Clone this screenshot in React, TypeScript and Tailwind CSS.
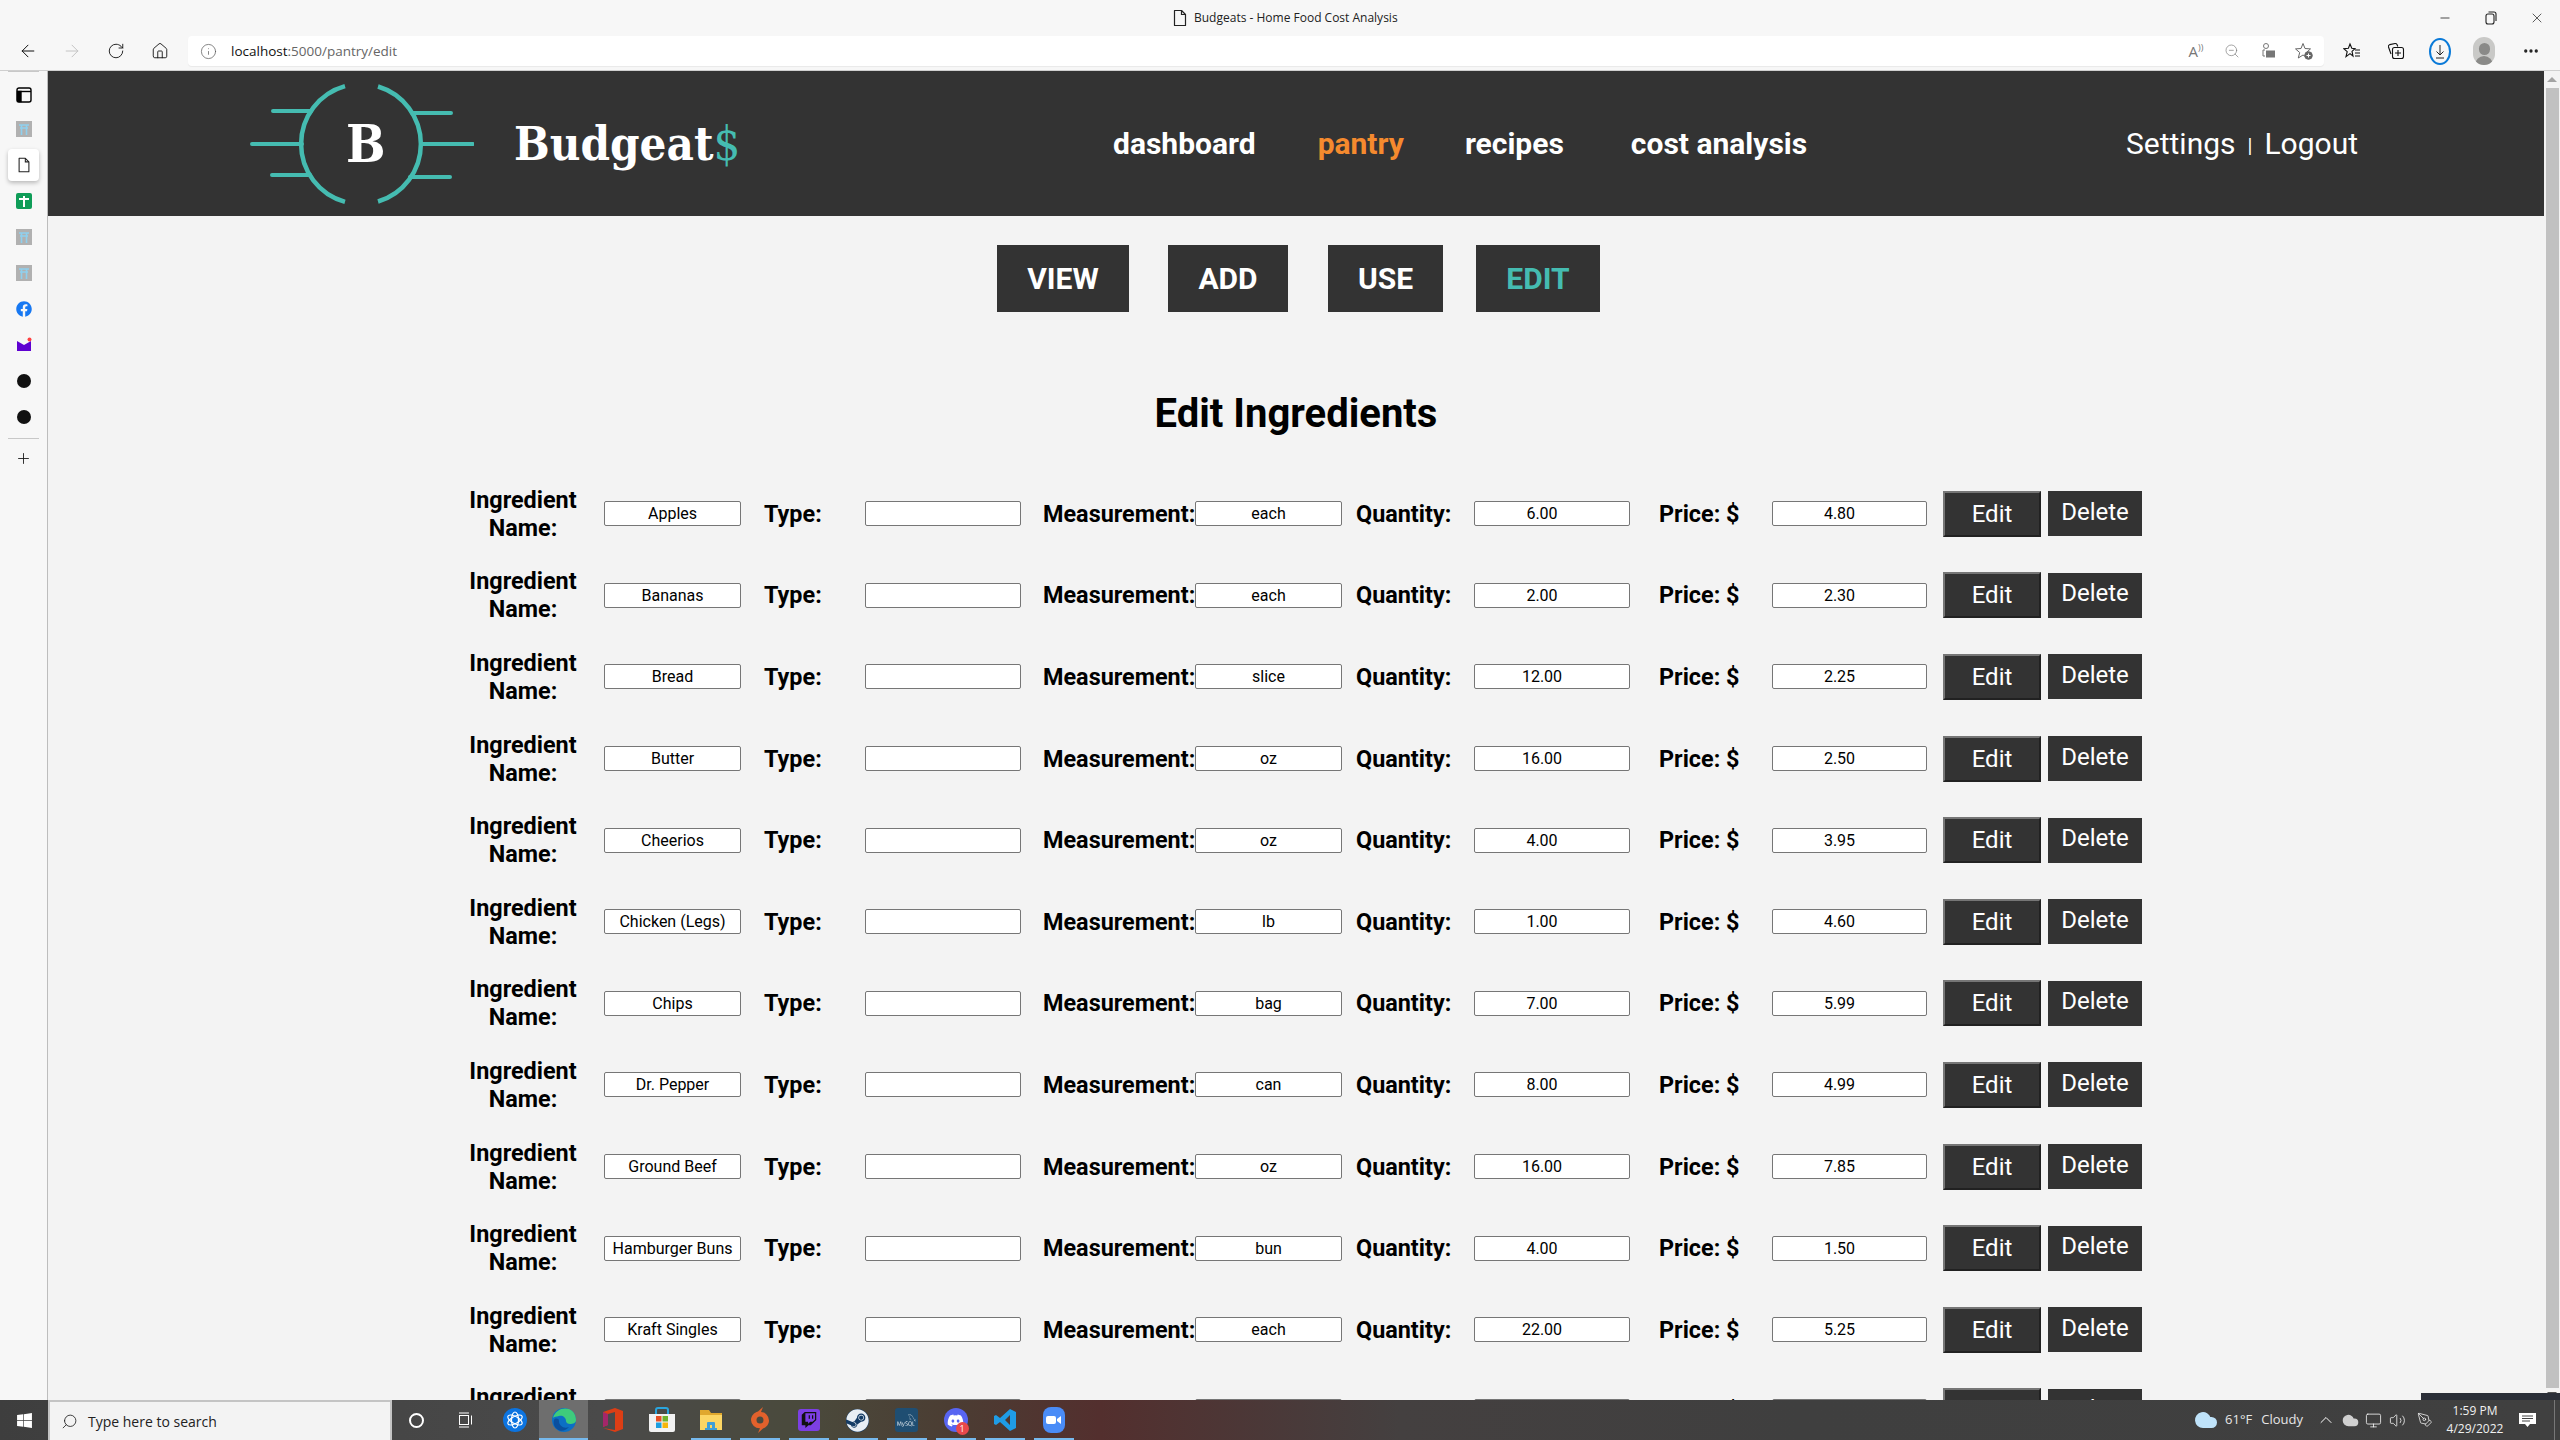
import { ArrowLeft, ArrowRight, RotateCw, Home, Info, ZoomOut, Minus, X, Plus, ChevronUp, Volume2, Monitor, Search, PenTool, Cloud, Ellipsis } from "lucide-react";
import { FaWindows, FaTwitch, FaSteam, FaDiscord, FaFacebook } from "react-icons/fa";
import { SiMysql } from "react-icons/si";

const ingredients = [
  { name: "Apples", unit: "each", qty: "6.00", price: "4.80" },
  { name: "Bananas", unit: "each", qty: "2.00", price: "2.30" },
  { name: "Bread", unit: "slice", qty: "12.00", price: "2.25" },
  { name: "Butter", unit: "oz", qty: "16.00", price: "2.50" },
  { name: "Cheerios", unit: "oz", qty: "4.00", price: "3.95" },
  { name: "Chicken (Legs)", unit: "lb", qty: "1.00", price: "4.60" },
  { name: "Chips", unit: "bag", qty: "7.00", price: "5.99" },
  { name: "Dr. Pepper", unit: "can", qty: "8.00", price: "4.99" },
  { name: "Ground Beef", unit: "oz", qty: "16.00", price: "7.85" },
  { name: "Hamburger Buns", unit: "bun", qty: "4.00", price: "1.50" },
  { name: "Kraft Singles", unit: "each", qty: "22.00", price: "5.25" },
  { name: "", unit: "", qty: "", price: "" },
];

const DocIcon = ({ size = 18 }: { size?: number }) => (
  <svg width={size} height={size} viewBox="0 0 18 18" fill="none" stroke="#222" strokeWidth="1.2">
    <path d="M3.5 1.5h7l4 4v11h-11z" strokeLinejoin="round" />
    <path d="M10.5 1.5v4h4" />
  </svg>
);

const Torii = () => (
  <div className="w-4 h-4 bg-[#b1b1b1] flex items-center justify-center">
    <svg width="12" height="12" viewBox="0 0 12 12" stroke="#8fd0ee" strokeWidth="1.6" fill="none">
      <path d="M1 2h10M2 5h8M3.5 2v10M8.5 2v10" />
    </svg>
  </div>
);

const SideSlot = ({ children, h = "h-9" }: { children: React.ReactNode; h?: string }) => (
  <div className={`${h} flex items-center justify-center`}>{children}</div>
);

const Sidebar = () => (
  <aside className="w-[48px] shrink-0 border-r border-[#bdbdbd] bg-[#f7f7f7] flex flex-col items-center">
    <div className="w-[31px] h-px bg-[#c8c8c8] mb-[6px] mr-[1px]" />
    <SideSlot h="h-[34px]">
      <svg width="16" height="16" viewBox="0 0 16 16" fill="none" stroke="#000" strokeWidth="1.4">
        <rect x="1" y="1" width="14" height="14" rx="2" />
        <path d="M1 4.5h14" />
        <rect x="1.5" y="4.5" width="3.5" height="10" fill="#000" />
      </svg>
    </SideSlot>
    <SideSlot h="h-[34px]"><Torii /></SideSlot>
    <div className="w-[31px] h-[32px] bg-white rounded-[4px] shadow-[0_2px_4px_rgba(0,0,0,0.25)] flex items-center justify-center mt-[3px] mb-[2px]">
      <DocIcon size={16} />
    </div>
    <SideSlot>
      <div className="w-4 h-4 rounded-[2px] bg-[#0f9d58] relative flex items-center justify-center">
        <div className="w-[10px] h-[2px] bg-white absolute top-[5px]" />
        <div className="w-[2px] h-[11px] bg-white" />
      </div>
    </SideSlot>
    <SideSlot><Torii /></SideSlot>
    <SideSlot><Torii /></SideSlot>
    <SideSlot><FaFacebook className="text-[#1778f2] text-[16px]" /></SideSlot>
    <SideSlot>
      <svg width="16" height="16" viewBox="0 0 16 16">
        <path d="M1 4l7 4 7-4v10H1z" fill="#5f01d1" />
        <circle cx="13.5" cy="2.5" r="2" fill="#ff4040" />
      </svg>
    </SideSlot>
    <SideSlot><div className="w-[14px] h-[14px] rounded-full bg-[#111]" /></SideSlot>
    <SideSlot><div className="w-[14px] h-[14px] rounded-full bg-[#111]" /></SideSlot>
    <div className="w-[31px] h-px bg-[#c8c8c8] mt-[3px] mb-[11px] mr-[1px]" />
    <Plus size={17} strokeWidth={1.2} color="#111" />
  </aside>
);

const TitleBar = () => (
  <div className="h-[36px] flex items-center pl-[1171px] text-[12px] text-[#222]">
    <DocIcon size={18} />
    <span className="ml-[5px] mb-[1px]">Budgeats - Home Food Cost Analysis</span>
    <div className="ml-auto flex items-center text-[#222]">
      <div className="w-[46px] flex justify-center"><Minus size={14} strokeWidth={1.4} /></div>
      <div className="w-[46px] flex justify-center">
        <svg width="12" height="14" viewBox="0 0 12 14" fill="none" stroke="#222" strokeWidth="1.1">
          <rect x="1" y="3" width="8" height="10" rx="2" />
          <path d="M3.5 1h5.5a2 2 0 0 1 2 2v7" />
        </svg>
      </div>
      <div className="w-[46px] flex justify-center"><X size={16} strokeWidth={1.1} /></div>
    </div>
  </div>
);

const ToolBtn = ({ children, w = "w-[44px]" }: { children: React.ReactNode; w?: string }) => (
  <div className={`${w} flex items-center justify-center`}>{children}</div>
);

const Toolbar = () => (
  <div className="h-[34px] flex items-start pl-[6px] pr-[4px]">
    <ToolBtn w="w-[44px] h-[30px]"><ArrowLeft size={20} strokeWidth={1.2} color="#111" /></ToolBtn>
    <ToolBtn w="w-[44px] h-[30px]"><ArrowRight size={20} strokeWidth={1.2} color="#c4c4c4" /></ToolBtn>
    <ToolBtn w="w-[44px] h-[30px]"><RotateCw size={18} strokeWidth={1.2} color="#111" /></ToolBtn>
    <ToolBtn w="w-[44px] h-[30px]"><Home size={18} strokeWidth={1.2} color="#111" /></ToolBtn>
    <div className="ml-[6px] flex-1 h-[30px] bg-white rounded-[4px] shadow-[0_1px_1px_rgba(0,0,0,0.06)] flex items-center pl-[12px]">
      <Info size={17} strokeWidth={1} color="#555" />
      <span className="ml-[14px] text-[13.5px] text-[#666]"><span className="text-[#111]">localhost</span>:5000/pantry/edit</span>
      <div className="ml-auto flex items-center text-[#777] pr-[2px]">
        <ToolBtn w="w-[36px]"><span className="text-[15px] text-[#777]">A<span className="text-[9px] align-super">))</span></span></ToolBtn>
        <ToolBtn w="w-[36px]"><ZoomOut size={16} strokeWidth={1} /></ToolBtn>
        <ToolBtn w="w-[36px]">
          <svg width="16" height="18" viewBox="0 0 16 18" fill="none" stroke="#777" strokeWidth="1">
            <circle cx="6" cy="4" r="2.5" />
            <path d="M5 8H3v6h2" />
            <rect x="6.5" y="9" width="8" height="6" fill="#777" />
          </svg>
        </ToolBtn>
        <ToolBtn w="w-[36px]">
          <svg width="18" height="18" viewBox="0 0 18 18" fill="none" stroke="#666" strokeWidth="1">
            <path d="M8 1.5l2 5 5.5.4-4.2 3.6 1.4 5.4L8 13l-4.7 3 1.4-5.5L.5 6.9 6 6.5z" />
            <circle cx="13.5" cy="13.5" r="3.8" fill="#666" />
            <path d="M13.5 11.5v4M11.5 13.5h4" stroke="#fff" />
          </svg>
        </ToolBtn>
      </div>
    </div>
    <div className="ml-[6px] flex items-center h-[30px]">
      <ToolBtn>
        <svg width="18" height="18" viewBox="0 0 18 18" fill="none" stroke="#111" strokeWidth="1.1">
          <path d="M7 2l1.8 4.3 3.2.3-3 2.8 1 4.6-3-2.4-4 3 1.2-5L1 6.8l4.4-.5z" />
          <path d="M12 8h5M12 11h5M12 14h5" />
        </svg>
      </ToolBtn>
      <ToolBtn>
        <svg width="18" height="18" viewBox="0 0 18 18" fill="none" stroke="#111" strokeWidth="1.1">
          <path d="M4 12L1.5 5a2 2 0 0 1 1.3-2.4L8 1.5a2 2 0 0 1 2 1l.8 2" />
          <rect x="5.5" y="5.5" width="11" height="11" rx="2" />
          <path d="M11 8v6M8 11h6" />
        </svg>
      </ToolBtn>
      <ToolBtn>
        <svg width="22" height="27" viewBox="0 0 22 27" fill="none">
          <ellipse cx="11" cy="13.5" rx="10" ry="12.5" stroke="#0a7ad8" strokeWidth="2" />
          <path d="M11 7v10M7.5 13.5L11 17l3.5-3.5M7 20h8" stroke="#222" strokeWidth="1" />
        </svg>
      </ToolBtn>
      <ToolBtn>
        <div className="w-[22px] h-[28px] rounded-full bg-[#c9c9c7] flex flex-col items-center justify-end overflow-hidden">
          <div className="w-[11px] h-[12px] rounded-full bg-[#8a8a88] mb-[1px]" />
          <div className="w-[18px] h-[9px] rounded-t-full bg-[#8a8a88]" />
        </div>
      </ToolBtn>
      <ToolBtn w="w-[50px]"><Ellipsis size={18} strokeWidth={2.4} color="#222" /></ToolBtn>
    </div>
  </div>
);

const Logo = () => (
  <div className="relative w-[224px] h-[122px] shrink-0">
    <svg width="224" height="122" viewBox="0 0 224 122" fill="none" stroke="#45bcb1" strokeWidth="4.5">
      <path d="M95 3.200A60 60 0 0 0 95 118.800" />
      <path d="M128 3.500A60 60 0 0 1 128 118.500" />
      <g strokeLinecap="round" strokeWidth="4">
        <path d="M2 61h50M23 28h38M22 92h38" />
        <path d="M171 61h52M162 30h39M160 94h40" />
      </g>
    </svg>
    <span className="absolute left-[96px] top-[25px] text-[52px] leading-[72px] font-bold text-white font-['DejaVu_Serif_Condensed','DejaVu_Serif',serif] [font-stretch:condensed]">B</span>
  </div>
);

const navLinks = [
  { label: "dashboard", cls: "text-white" },
  { label: "pantry", cls: "text-[#f58a2e] ml-[62px]" },
  { label: "recipes", cls: "text-white ml-[61px]" },
  { label: "cost analysis", cls: "text-white ml-[67px]" },
];

const Header = () => (
  <header className="h-[145px] bg-[#333333] flex items-center pl-[202px]">
    <Logo />
    <div className="ml-[40px] w-[599px] text-[47px] leading-none font-bold text-white font-['DejaVu_Serif_Condensed','DejaVu_Serif',serif] [font-stretch:condensed]">
      Budgeat<span className="text-[#45bcb1] font-normal">$</span>
    </div>
    <nav className="flex items-center text-[30px] font-bold">
      {navLinks.map((l) => (
        <a key={l.label} className={l.cls}>{l.label}</a>
      ))}
    </nav>
    <div className="ml-auto mr-[186px] flex items-center text-[30px] text-white">
      <a>Settings</a>
      <span className="mx-[12px] text-[20px] mt-[4px]">|</span>
      <a>Logout</a>
    </div>
  </header>
);

const tabs = [
  { label: "VIEW", cls: "w-[132px] text-white" },
  { label: "ADD", cls: "w-[120px] ml-[39px] text-white" },
  { label: "USE", cls: "w-[115px] ml-[40px] text-white" },
  { label: "EDIT", cls: "w-[124px] ml-[33px] text-[#45bcb1]" },
];

const Field = ({ value, w, number }: { value: string; w: string; number?: boolean }) => (
  <input
    readOnly
    value={value}
    className={`${w} h-[25px] shrink-0 bg-white border border-[#767676] rounded-[2px] text-center text-[16px] text-black ${number ? "pr-[20px]" : ""}`}
  />
);

const Label = ({ w, children }: { w: string; children: React.ReactNode }) => (
  <label className={`${w} shrink-0 text-[23.4px] leading-[28px] font-bold text-black`}>{children}</label>
);

const Row = ({ item }: { item: (typeof ingredients)[number] }) => (
  <form className="h-[81.6px] flex items-center pl-[421px]">
    <Label w="w-[108px] mr-[27px] text-center">Ingredient Name:</Label>
    <Field value={item.name} w="w-[137px]" />
    <Label w="w-[101px] ml-[23px]">Type:</Label>
    <Field value="" w="w-[156px]" />
    <Label w="w-[152px] ml-[22px] whitespace-nowrap">Measurement:</Label>
    <Field value={item.unit} w="w-[147px]" />
    <Label w="w-[118px] ml-[14px]">Quantity:</Label>
    <Field value={item.qty} w="w-[156px]" number />
    <Label w="w-[113px] ml-[29px]">Price: $</Label>
    <Field value={item.price} w="w-[155px]" number />
    <button type="button" className="ml-[16px] w-[98px] h-[46px] shrink-0 bg-[#333333] border-2 border-t-[#767676] border-l-[#767676] border-b-[#212121] border-r-[#212121] text-[24px] text-white">
      Edit
    </button>
    <button type="button" className="ml-[7px] w-[94px] h-[45px] shrink-0 bg-[#333333] pb-[4px] text-[24px] text-white">
      Delete
    </button>
  </form>
);

const Scrollbar = () => (
  <div className="w-[16px] shrink-0 bg-[#f3f3f3] flex flex-col items-center">
    <div className="h-[17px] flex items-center justify-center">
      <div className="border-x-[5px] border-x-transparent border-b-[5px] border-b-[#a3a3a3]" />
    </div>
    <div className="w-[13px] flex-1 bg-[#c1c1c1]" />
    <div className="h-[12px] w-full bg-[#f3f3f3] flex items-center justify-center">
      <div className="border-x-[5px] border-x-transparent border-t-[5px] border-t-[#505050]" />
    </div>
  </div>
);

const EdgeIcon = () => (
  <svg width="26" height="26" viewBox="0 0 26 26">
    <circle cx="13" cy="13" r="12" fill="#0c6fc4" />
    <path d="M2 11C4 3 12 0 18 2c5 2 7 7 7 11 0 3-3 4-6 4-2 0-4-1-4-3 0-4-4-6-7-5-3 .5-5 1-6 2z" fill="#3ecb7c" />
    <path d="M8 14c0 5 5 8 10 6-3 4-9 5-12 2-3-2-4-6-3-9 1-2 5-2 5 1z" fill="#0a4f9e" />
  </svg>
);

const OfficeIcon = () => (
  <svg width="22" height="26" viewBox="0 0 22 26">
    <path d="M1 5l12-4 8 3v18l-8 3-12-4 12 2V5L6 7v11l-5 2z" fill="#dc3e15" />
    <path d="M1 5l5 2v11l-5 2z" fill="#a4266a" />
  </svg>
);

const StoreIcon = () => (
  <svg width="28" height="26" viewBox="0 0 28 26">
    <path d="M8 7V3a2 2 0 0 1 2-2h8a2 2 0 0 1 2 2v4" fill="none" stroke="#2aa5dd" strokeWidth="2" />
    <path d="M1 7h26v16a2 2 0 0 1-2 2H3a2 2 0 0 1-2-2z" fill="#f2f2f2" />
    <rect x="8" y="9" width="5.5" height="5.5" fill="#e84f24" />
    <rect x="14.5" y="9" width="5.5" height="5.5" fill="#6fb32c" />
    <rect x="8" y="15.5" width="5.5" height="5.5" fill="#1c9fe0" />
    <rect x="14.5" y="15.5" width="5.5" height="5.5" fill="#f7b60b" />
  </svg>
);

const FolderIcon = () => (
  <svg width="24" height="22" viewBox="0 0 24 22">
    <path d="M1 1h9l2 3h11v3H1z" fill="#e0a82e" />
    <path d="M1 6h22v15H1z" fill="#fcd664" />
    <path d="M8 19v-5a1 1 0 0 1 1-1h6a1 1 0 0 1 1 1v5h-3v-3h-2v3z" fill="#3f9fd8" />
    <path d="M6 19h12v2H6z" fill="#3f9fd8" />
  </svg>
);

const OriginIcon = () => (
  <svg width="20" height="26" viewBox="0 0 20 26">
    <path d="M13 0l-2 5a8.5 8.5 0 0 1 8 8.5c0 4-3 7-6 8l-5 4.500 2-4.700a8.500 8.500 0 0 1-9-8.300c0-4 3-7.500 7-8.500z" fill="#e2612c" />
    <circle cx="10" cy="13" r="3.500" fill="#4a4a3f" />
  </svg>
);

const CodeIcon = () => (
  <svg width="24" height="24" viewBox="0 0 24 24">
    <path d="M17 1l6 3v16l-6 3L7 14l-4 3-2-1V8l2-1 4 3zm0 6l-5 5 5 5z" fill="#1f9ce6" />
  </svg>
);

const ZoomIcon = () => (
  <div className="w-[22px] h-[26px] rounded-[8px] bg-[#4a8cf7] flex items-center justify-center">
    <svg width="16" height="10" viewBox="0 0 16 10">
      <rect x="0" y="1" width="10" height="8" rx="2" fill="#fff" />
      <path d="M11 4l4-3v8l-4-3z" fill="#fff" />
    </svg>
  </div>
);

const BattleIcon = () => (
  <div className="w-[24px] h-[24px] rounded-full bg-[#0c74e0] flex items-center justify-center">
    <svg width="18" height="18" viewBox="0 0 18 18" fill="none" stroke="#fff" strokeWidth="1.2">
      <ellipse cx="9" cy="9" rx="3.500" ry="8" />
      <ellipse cx="9" cy="9" rx="3.500" ry="8" transform="rotate(60 9 9)" />
      <ellipse cx="9" cy="9" rx="3.500" ry="8" transform="rotate(120 9 9)" />
    </svg>
  </div>
);

const TaskItem = ({ children, open, active }: { children: React.ReactNode; open?: boolean; active?: boolean }) => (
  <div className={`w-[49px] h-full relative flex items-center justify-center ${active ? "bg-[#6e6e6e]" : ""}`}>
    {children}
    {open && <div className={`absolute bottom-0 h-[2px] bg-[#76b9ed] ${active ? "w-full" : "w-[40px]"}`} />}
  </div>
);

const Taskbar = () => (
  <footer className="h-[40px] shrink-0 flex items-center text-white font-['Open_Sans',sans-serif] bg-[linear-gradient(90deg,#3e3e3e_0px,#4a4a4a_600px,#4a4a3c_800px,#4b3d33_950px,#532f2e_1100px,#444040_1400px,#3f3f3f_1800px,#404040_2560px)]">
    <div className="w-[48px] flex justify-center"><FaWindows size={17} /></div>
    <div className="w-[344px] h-full bg-[#f3f3f3] border-2 border-b-0 border-[#c4c4c4] flex items-center pl-[11px] text-[#222]">
      <Search size={17} strokeWidth={1.2} className="-scale-x-100" />
      <span className="ml-[10px] text-[14px]">Type here to search</span>
    </div>
    <div className="w-[48px] flex justify-center"><div className="w-[15px] h-[15px] rounded-full border-2 border-white" /></div>
    <div className="w-[50px] flex justify-center">
      <svg width="18" height="18" viewBox="0 0 18 18" fill="none" stroke="#fff" strokeWidth="1">
        <rect x="3.500" y="4.500" width="9" height="9" />
        <path d="M3 2h10M3 16h10M15.500 4.500v9" />
      </svg>
    </div>
    <TaskItem><BattleIcon /></TaskItem>
    <TaskItem open active><EdgeIcon /></TaskItem>
    <TaskItem><OfficeIcon /></TaskItem>
    <TaskItem><StoreIcon /></TaskItem>
    <TaskItem open><FolderIcon /></TaskItem>
    <TaskItem open><OriginIcon /></TaskItem>
    <TaskItem open>
      <div className="w-[22px] h-[22px] rounded-[3px] bg-[#7c3fe4] flex items-center justify-center"><FaTwitch size={16} color="#111" /></div>
    </TaskItem>
    <TaskItem open>
      <div className="w-[23px] h-[23px] rounded-full bg-[#143c66] flex items-center justify-center"><FaSteam size={23} color="#e8eef4" /></div>
    </TaskItem>
    <TaskItem open>
      <div className="w-[23px] h-[24px] rounded-[3px] bg-[#1f4e72] flex items-center justify-center"><SiMysql size={19} color="#c9d6df" /></div>
    </TaskItem>
    <TaskItem open>
      <div className="relative w-[24px] h-[24px] rounded-full bg-[#5865f2] flex items-center justify-center">
        <FaDiscord size={17} color="#fff" />
        <div className="absolute -right-[1px] -bottom-[3px] w-[13px] h-[13px] rounded-full bg-[#e8484a] text-[9px] leading-[13px] text-center">1</div>
      </div>
    </TaskItem>
    <TaskItem open><CodeIcon /></TaskItem>
    <TaskItem open><ZoomIcon /></TaskItem>
    <div className="ml-auto flex items-center h-full relative">
      <Cloud size={24} fill="#bfe3fa" stroke="#bfe3fa" />
      <span className="ml-[7px] text-[13px] text-[#e6e6e6]">61°F</span>
      <span className="ml-[9px] text-[13px] text-[#e6e6e6]">Cloudy</span>
      <ChevronUp size={20} strokeWidth={1.2} className="ml-[13px]" />
      <Cloud size={17} fill="#d0d0d0" stroke="#d0d0d0" className="ml-[6px]" />
      <Monitor size={17} strokeWidth={1.1} className="ml-[6px]" />
      <Volume2 size={17} strokeWidth={1.1} className="ml-[7px]" />
      <PenTool size={16} strokeWidth={1.1} className="ml-[11px]" />
      <div className="ml-[10px] w-[64px] text-center text-[12px] leading-[18px] text-[#f0f0f0]">
        <div>1:59 PM</div>
        <div>4/29/2022</div>
      </div>
      <div className="ml-[12px] mr-[24px] relative">
        <svg width="17" height="17" viewBox="0 0 17 17">
          <path d="M0 1h17v11h-6l-2.500 3-2.500-3H0z" fill="#fff" />
          <path d="M3 4h11M3 6.500h11M3 9h8" stroke="#444" strokeWidth="1" />
        </svg>
      </div>
      <div className="absolute right-[5px] top-0 h-full w-px bg-[#777]" />
      <div className="absolute right-0 -top-[7px] w-[139px] h-[7px] bg-[#2b2f38]" />
    </div>
  </footer>
);

export default function App() {
  return (
    <div className="h-screen w-full flex flex-col overflow-hidden bg-[#f7f7f7] font-['Roboto',sans-serif]">
      <div className="font-['Open_Sans',sans-serif]">
        <TitleBar />
        <Toolbar />
      </div>
      <div className="flex flex-1 min-h-0 border-t border-[#cfcfcf] font-['Open_Sans',sans-serif]">
        <Sidebar />
        <main className="flex-1 min-w-0 overflow-hidden bg-[#f3f3f3] font-['Roboto',sans-serif]">
          <Header />
          <div className="mt-[29px] flex justify-center pl-[5px]">
            {tabs.map((t) => (
              <a key={t.label} className={`${t.cls} h-[67px] pb-[1px] bg-[#333333] flex items-center justify-center text-[30px] font-bold`}>
                {t.label}
              </a>
            ))}
          </div>
          <h1 className="mt-[78px] h-[48px] leading-[48px] text-center text-[40px] font-bold text-black">Edit Ingredients</h1>
          <div className="mt-[35px]">
            {ingredients.map((item, i) => (
              <Row key={i} item={item} />
            ))}
          </div>
        </main>
        <Scrollbar />
      </div>
      <Taskbar />
    </div>
  );
}
